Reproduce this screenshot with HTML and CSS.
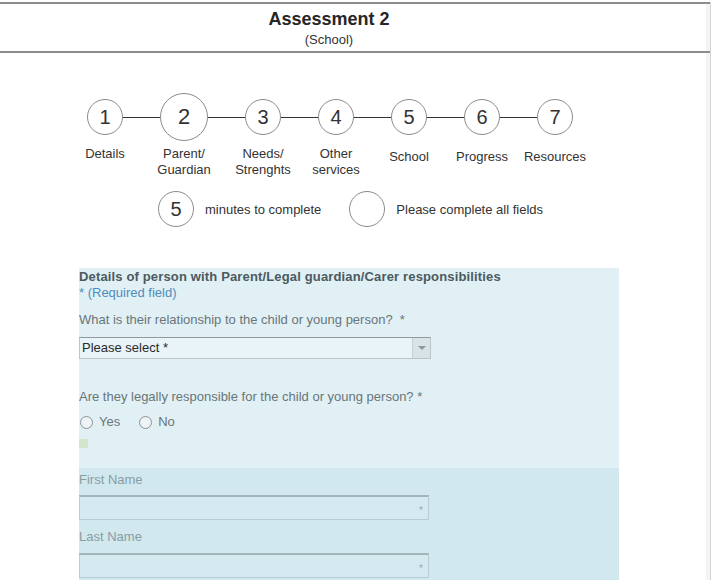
FILE: index.html
```html
<!DOCTYPE html>
<html lang="en">
<head>
<meta charset="utf-8">
<title>Assessment 2</title>
<link rel="stylesheet" href="styles.css">
</head>
<body>
<div class="page">
  <header class="header">
    <div class="header-inner">
      <div class="title">Assessment 2</div>
      <div class="subtitle">(School)</div>
    </div>
  </header>

  <div class="steps">
    <div class="step">
      <div class="circle-box"><div class="circle">1</div></div>
      <div class="label">Details</div>
    </div>
    <div class="line"></div>
    <div class="step step-big">
      <div class="circle-box"><div class="circle circle-big">2</div></div>
      <div class="label">Parent/<br>Guardian</div>
    </div>
    <div class="line"></div>
    <div class="step">
      <div class="circle-box"><div class="circle">3</div></div>
      <div class="label">Needs/<br>Strenghts</div>
    </div>
    <div class="line"></div>
    <div class="step">
      <div class="circle-box"><div class="circle">4</div></div>
      <div class="label">Other<br>services</div>
    </div>
    <div class="line"></div>
    <div class="step">
      <div class="circle-box"><div class="circle">5</div></div>
      <div class="label label-low">School</div>
    </div>
    <div class="line"></div>
    <div class="step">
      <div class="circle-box"><div class="circle">6</div></div>
      <div class="label label-low">Progress</div>
    </div>
    <div class="line"></div>
    <div class="step">
      <div class="circle-box"><div class="circle">7</div></div>
      <div class="label label-low">Resources</div>
    </div>
  </div>

  <div class="info">
    <div class="circle">5</div>
    <div class="info-text">minutes to complete</div>
    <div class="circle"></div>
    <div class="info-text">Please complete all fields</div>
  </div>

  <div class="panel">
    <div class="panel-top">
      <div class="panel-heading">Details of person with Parent/Legal guardian/Carer responsibilities</div>
      <div class="required">* (Required field)</div>
      <div class="question q1">What is their relationship to the child or young person?&nbsp; *</div>
      <div class="select">
        <span class="select-text">Please select *</span>
        <span class="select-arrow"><span class="tri"></span></span>
      </div>
      <div class="question q2">Are they legally responsible for the child or young person? *</div>
      <div class="radios">
        <span class="radio"></span><span class="radio-label">Yes</span>
        <span class="radio radio-second"></span><span class="radio-label">No</span>
      </div>
      <div class="green-mark"></div>
    </div>
    <div class="panel-bottom">
      <div class="field-label">First Name</div>
      <div class="field"><span class="star">*</span></div>
      <div class="field-label field-label-next">Last Name</div>
      <div class="field field-next"><span class="star">*</span></div>
    </div>
  </div>
</div>
</body>
</html>
```

FILE: styles.css
```css
html, body {
  margin: 0;
  padding: 0;
  background: #ffffff;
}

body {
  font-family: "Liberation Sans", Arial, sans-serif;
  color: #333333;
  overflow: hidden;
}

.page {
  width: 710px;
  height: 580px;
  border-right: 1px solid #d4d4d4;
  box-shadow: inset -4px 0 0 #f4f4f4;
}

.header {
  margin-top: 2px;
  border-top: 2px solid #8c8c8c;
  border-bottom: 2px solid #8c8c8c;
  padding: 4px 0 3px;
}

.header-inner {
  width: 658px;
  text-align: center;
}

.title {
  font-size: 18px;
  font-weight: bold;
  line-height: 22px;
  color: #262626;
}

.subtitle {
  font-size: 13px;
  line-height: 16px;
  margin-top: 2px;
  color: #333333;
}

/* steps */
.steps {
  display: flex;
  align-items: flex-start;
  margin: 40px 0 0 87px;
}

.step {
  width: 36px;
  display: flex;
  flex-direction: column;
  align-items: center;
}

.step-big {
  width: 48px;
}

.circle-box {
  height: 48px;
  display: flex;
  align-items: center;
  justify-content: center;
}

.circle {
  box-sizing: border-box;
  width: 36px;
  height: 36px;
  border: 1px solid #8a8a8a;
  border-radius: 50%;
  background: #ffffff;
  display: flex;
  align-items: center;
  justify-content: center;
  font-size: 20px;
  color: #333333;
  flex: none;
}

.circle-big {
  width: 48px;
  height: 48px;
  font-size: 22px;
}

.line {
  width: 37px;
  height: 1px;
  background: #333333;
  margin-top: 24px;
  flex: none;
}

.label {
  margin-top: 5px;
  font-size: 13px;
  line-height: 16px;
  white-space: nowrap;
  text-align: center;
  color: #333333;
}

.label-low {
  margin-top: 8px;
}

/* info row */
.info {
  display: flex;
  align-items: center;
  margin: 13px 0 0 158px;
}

.info-text {
  font-size: 13px;
  line-height: 16px;
  padding-top: 2px;
  margin: 0 28px 0 11px;
  color: #333333;
}

/* panel */
.panel {
  margin: 41px 0 0 79px;
  width: 540px;
}

.panel-top {
  box-sizing: border-box;
  background: #e1f0f5;
  height: 200px;
  padding-top: 1px;
  overflow: hidden;
}

.panel-heading {
  font-size: 13px;
  font-weight: bold;
  line-height: 16px;
  letter-spacing: 0.15px;
  color: #4b5a5f;
  white-space: nowrap;
}

.required {
  font-size: 13px;
  line-height: 16px;
  color: #4d8dbd;
}

.question {
  font-size: 13px;
  line-height: 16px;
  color: #6a7579;
}

.q1 {
  margin-top: 11px;
}

.q2 {
  margin-top: 30px;
}

.select {
  box-sizing: border-box;
  margin-top: 9px;
  width: 352px;
  height: 22px;
  border: 1px solid #bac5c9;
  border-top-color: #8f9a9e;
  background: #e8f4f7;
  display: flex;
  align-items: stretch;
}

.select-text {
  flex: 1;
  font-size: 13px;
  line-height: 20px;
  padding-left: 2px;
  color: #2a2a2a;
}

.select-arrow {
  width: 17px;
  background: #d8e3e7;
  border-left: 1px solid #c6d1d5;
  display: flex;
  align-items: center;
  justify-content: center;
}

.tri {
  width: 0;
  height: 0;
  border-left: 4px solid transparent;
  border-right: 4px solid transparent;
  border-top: 4px solid #8c979b;
}

.radios {
  margin-top: 9px;
  display: flex;
  align-items: center;
  height: 16px;
}

.radio {
  box-sizing: border-box;
  width: 13px;
  height: 13px;
  border: 1px solid #8b9397;
  border-radius: 50%;
  background: #eef3f5;
  margin-left: 1px;
  flex: none;
}

.radio-second {
  margin-left: 19px;
}

.radio-label {
  font-size: 13px;
  line-height: 16px;
  margin-left: 6px;
  color: #6a7579;
}

.green-mark {
  margin-top: 9px;
  width: 9px;
  height: 9px;
  background: #d3e6cd;
}

.panel-bottom {
  box-sizing: border-box;
  background: #d1e8ef;
  padding-top: 3px;
  height: 112px;
}

.field-label {
  font-size: 13px;
  line-height: 18px;
  color: #889da3;
}

.field-label-next {
  margin-top: 8px;
}

.field {
  box-sizing: border-box;
  margin-top: 6px;
  width: 350px;
  height: 25px;
  border: 1px solid #b8cdd3;
  border-top: 2px solid #a1b5bb;
  background: #d4eaf0;
  display: flex;
  justify-content: flex-end;
  align-items: flex-end;
  padding: 0 5px 2px 0;
}

.field-next {
  margin-top: 7px;
}

.star {
  font-size: 10px;
  line-height: 12px;
  color: #9aa8ac;
}
```
